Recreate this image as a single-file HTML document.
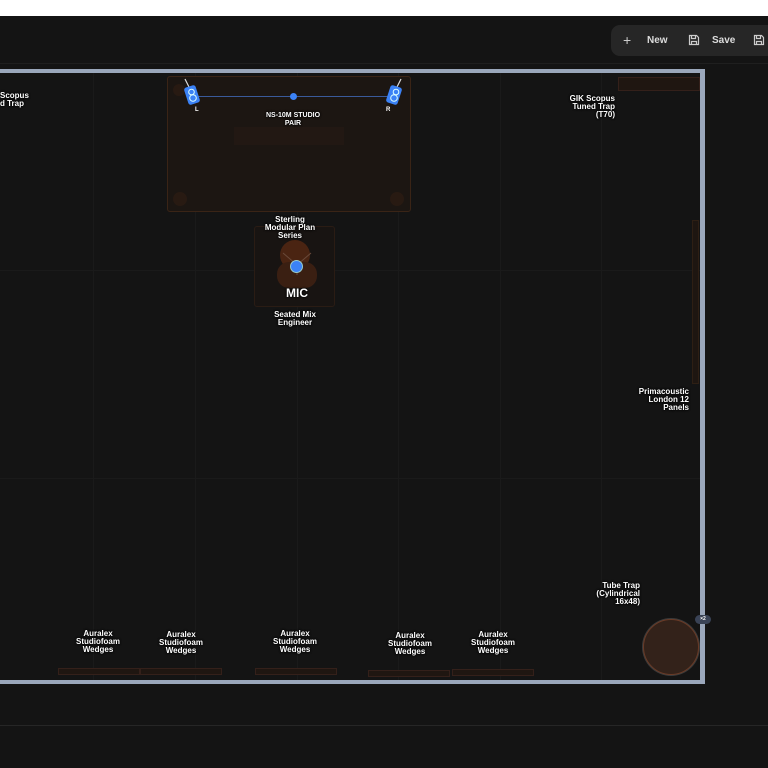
<!DOCTYPE html>
<html><head><meta charset="utf-8"><style>
*{margin:0;padding:0;box-sizing:border-box}
body{width:768px;height:768px;background:#141414;position:relative;overflow:hidden;font-family:"Liberation Sans",sans-serif}
.a{position:absolute}
.l{position:absolute;z-index:5;color:#fff;font-weight:bold;font-size:8px;line-height:8px;text-shadow:0 0 2px #000,0 0 2px #000}
.c{text-align:center}.r{text-align:right}
.vg{position:absolute;top:73px;height:607px;width:1px;background:#1a1a1a}
.hg{position:absolute;left:0;width:700px;height:1px;background:#1a1a1a}
.bar{position:absolute;height:7px;background:#1f1611;border:1px solid #34201a}
</style></head><body>
<div class="a" style="left:0;top:0;width:768px;height:16px;background:#fff"></div>
<div class="a" style="left:0;top:63px;width:768px;height:1px;background:#1f1f1f"></div>
<div class="a" style="left:611px;top:25px;width:170px;height:31px;background:#262626;border-radius:9px"></div>
<div class="l" style="left:623px;top:33px;font-size:14px;line-height:14px;color:#ccc;font-weight:normal;text-shadow:none">+</div>
<div class="l" style="left:647px;top:36px;font-size:10px;line-height:10px;color:#ddd;text-shadow:none">New</div>
<svg class="a" style="left:688px;top:34px" width="12" height="12" viewBox="0 0 12 12" fill="none" stroke="#ccc" stroke-width="1.2"><path d="M1.5 1.5h7l2 2v7h-9z M3.5 1.5v3h4v-3 M3.5 10.5v-3h5v3"/></svg>
<div class="l" style="left:712px;top:36px;font-size:10px;line-height:10px;color:#ddd;text-shadow:none">Save</div>
<svg class="a" style="left:753px;top:34px" width="12" height="12" viewBox="0 0 12 12" fill="none" stroke="#ccc" stroke-width="1.2"><path d="M1.5 1.5h7l2 2v7h-9z M3.5 1.5v3h4v-3 M3.5 10.5v-3h5v3"/></svg>

<div class="vg" style="left:93px"></div><div class="vg" style="left:195px"></div><div class="vg" style="left:297px"></div><div class="vg" style="left:398px"></div><div class="vg" style="left:500px"></div><div class="vg" style="left:601px"></div>
<div class="hg" style="top:270px"></div><div class="hg" style="top:478px"></div>

<div class="a" style="left:0;top:69px;width:705px;height:4px;background:#9aa7bb"></div>
<div class="a" style="left:700px;top:69px;width:5px;height:615px;background:#9aa7bb"></div>
<div class="a" style="left:0;top:680px;width:705px;height:4px;background:#9aa7bb"></div>
<div class="a" style="left:0;top:725px;width:768px;height:1px;background:#262626"></div>

<div class="a" style="left:167px;top:76px;width:244px;height:136px;background:#1c1612;border:1px solid #3a2416;border-radius:3px"></div>
<div class="a" style="left:234px;top:127px;width:110px;height:18px;background:#221813"></div>
<div class="a" style="left:173px;top:84px;width:12px;height:12px;border-radius:50%;background:#281a12"></div>
<div class="a" style="left:173px;top:192px;width:14px;height:14px;border-radius:50%;background:#281a12"></div>
<div class="a" style="left:390px;top:192px;width:14px;height:14px;border-radius:50%;background:#281a12"></div>
<div class="a" style="left:196px;top:96px;width:192px;height:1px;background:#3a5a9a"></div>
<div class="a" style="left:290px;top:93px;width:7px;height:7px;border-radius:50%;background:#3b82f6"></div>
<svg class="a" style="left:180px;top:78px" width="24" height="36" viewBox="0 0 24 36"><line x1="5" y1="1" x2="9" y2="9" stroke="#ddd" stroke-width="1.2"/><rect x="6" y="8" width="12" height="18" rx="2.5" fill="#3b82f6" transform="rotate(-18 12 17)"/><circle cx="11.5" cy="14" r="2.8" fill="none" stroke="#dff" stroke-width="1"/><circle cx="13" cy="20" r="3.3" fill="none" stroke="#dff" stroke-width="1"/><text x="15" y="33" font-size="6" font-weight="bold" fill="#fff" font-family="Liberation Sans">L</text></svg>
<svg class="a" style="left:380px;top:78px" width="24" height="36" viewBox="0 0 24 36"><line x1="21" y1="1" x2="17" y2="9" stroke="#ddd" stroke-width="1.2"/><rect x="8" y="8" width="12" height="18" rx="2.5" fill="#3b82f6" transform="rotate(18 14 17)"/><circle cx="16" cy="14" r="2.8" fill="none" stroke="#dff" stroke-width="1"/><circle cx="14" cy="20" r="3.3" fill="none" stroke="#dff" stroke-width="1"/><text x="6" y="33" font-size="6" font-weight="bold" fill="#fff" font-family="Liberation Sans">R</text></svg>
<div class="l c" style="left:243px;top:112px;width:100px;font-size:7px">NS-10M STUDIO<br>PAIR</div>

<div class="a" style="left:254px;top:226px;width:81px;height:81px;background:#181412;border:1px solid #2a1c14;border-radius:3px"></div>
<div class="a" style="left:280px;top:240px;width:30px;height:30px;border-radius:50%;background:#4a2412"></div>
<div class="a" style="left:277px;top:262px;width:40px;height:26px;border-radius:12px;background:#3a1f12"></div>
<svg class="a" style="left:277px;top:245px" width="40" height="40"><path d="M6 8L20 20L34 8M20 20V30" stroke="#6a4a3a" stroke-width="1" fill="none"/></svg>
<div class="a" style="left:290px;top:260px;width:13px;height:13px;border-radius:50%;background:#3b82f6;border:1.5px solid #9cc"></div>
<div class="l c" style="left:240px;top:216px;width:100px">Sterling<br>Modular Plan<br>Series</div>
<div class="l c" style="left:262px;top:287px;width:70px;font-size:12px;line-height:12px">MIC</div>
<div class="l c" style="left:250px;top:311px;width:90px">Seated Mix<br>Engineer</div>

<div class="l" style="left:0;top:92px">Scopus<br>d Trap</div>
<div class="bar" style="left:618px;top:77px;width:82px;height:14px"></div>
<div class="l r" style="left:540px;top:95px;width:75px">GIK Scopus<br>Tuned Trap<br>(T70)</div>
<div class="a" style="left:692px;top:220px;width:7px;height:164px;background:#1e1611;border:1px solid #2e1f14"></div>
<div class="l r" style="left:600px;top:388px;width:89px">Primacoustic<br>London 12<br>Panels</div>
<div class="l r" style="left:560px;top:582px;width:80px">Tube Trap<br>(Cylindrical<br>16x48)</div>
<div class="a" style="left:643px;top:619px;width:56px;height:56px;border-radius:50%;background:#33221a;border:1.5px solid #6a3a26;box-shadow:0 0 0 1px #3a3a3a"></div>
<div class="a" style="left:695px;top:615px;width:16px;height:9px;border-radius:5px;background:#3a4356;color:#fff;font-size:5px;font-weight:bold;text-align:center;line-height:9px">×2</div>

<div class="l c" style="left:58px;top:630px;width:80px">Auralex<br>Studiofoam<br>Wedges</div>
<div class="l c" style="left:141px;top:631px;width:80px">Auralex<br>Studiofoam<br>Wedges</div>
<div class="l c" style="left:255px;top:630px;width:80px">Auralex<br>Studiofoam<br>Wedges</div>
<div class="l c" style="left:370px;top:632px;width:80px">Auralex<br>Studiofoam<br>Wedges</div>
<div class="l c" style="left:453px;top:631px;width:80px">Auralex<br>Studiofoam<br>Wedges</div>
<div class="bar" style="left:58px;top:668px;width:82px"></div>
<div class="bar" style="left:140px;top:668px;width:82px"></div>
<div class="bar" style="left:255px;top:668px;width:82px"></div>
<div class="bar" style="left:368px;top:670px;width:82px"></div>
<div class="bar" style="left:452px;top:669px;width:82px"></div>
</body></html>
